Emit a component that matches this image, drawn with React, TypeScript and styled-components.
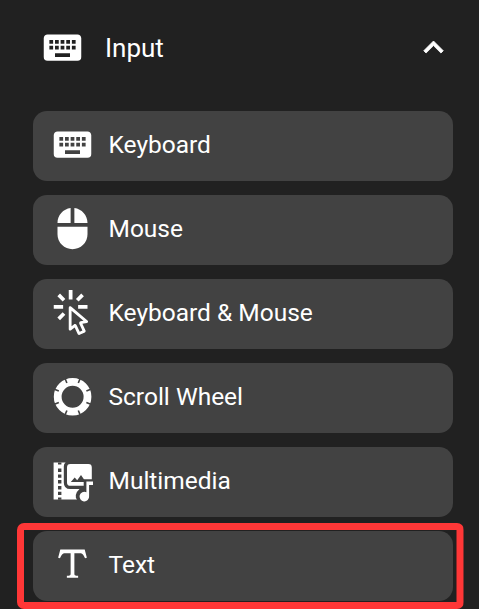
import React from "react";
import styled, { createGlobalStyle } from "styled-components";

const GlobalStyle = createGlobalStyle`
  body { margin: 0; background: #212121; }
`;

const Panel = styled.main`
  box-sizing: border-box;
  width: 479px;
  height: 609px;
  overflow: hidden;
  background: #212121;
  color: #fff;
  font-family: Roboto, sans-serif;
  font-size: 24.5px;
  line-height: 34px;
`;

const Header = styled.header`
  box-sizing: border-box;
  display: flex;
  align-items: center;
  height: 97px;
  padding: 0 26px 2px 39.5px;
`;

const HeaderTitle = styled.span`
  flex: 1;
  margin-left: 20.5px;
  font-size: 26px;
`;

const Glyph = styled.svg<{ $size?: number; $stroke?: number }>`
  display: block;
  flex: none;
  width: ${(p) => p.$size ?? 45}px;
  height: ${(p) => p.$size ?? 45}px;
  fill: #fff;
  stroke: ${(p) => (p.$stroke ? "#fff" : "none")};
  stroke-width: ${(p) => p.$stroke ?? 0};
  overflow: visible;
`;

const List = styled.ul`
  list-style: none;
  display: flex;
  flex-direction: column;
  gap: 14px;
  margin: 14px 26px 0 33px;
  padding: 0;
`;

const Item = styled.li`
  position: relative;
  box-sizing: border-box;
  display: flex;
  align-items: center;
  height: 70px;
  padding: 0 17px 3.8px;
  border-radius: 14px;
  background: #424242;
`;

const ItemLabel = styled.span`
  margin-left: 13.5px;
  padding-top: 2px;
`;

const Highlight = styled.div`
  position: absolute;
  inset: -8px -10.5px -8px -16px;
  border-radius: 7px;
  background: #ff3737;
  clip-path: polygon(evenodd, 0 0, 100% 0, 100% 100%, 0 100%, 0 0, 7px 7px, calc(100% - 7px) 7px, calc(100% - 7px) calc(100% - 7px), 7px calc(100% - 7px), 7px 7px);
`;

const KEYBOARD =
  "M19,10H17V8H19M19,13H17V11H19M16,10H14V8H16M16,13H14V11H16M16,17H8V15H16M7,10H5V8H7M7,13H5V11H7M8,11H10V13H8M8,8H10V10H8M11,11H13V13H11M11,8H13V10H11M20,5H4C2.89,5 2,5.89 2,7V17A2,2 0 0,0 4,19H20A2,2 0 0,0 22,17V7C22,5.89 21.1,5 20,5Z";
const MOUSE =
  "M11,1.07C7.05,1.56 4,4.92 4,9H11M4,15A8,8 0 0,0 12,23A8,8 0 0,0 20,15V11H4M13,1.07V9H20C20,4.92 16.94,1.56 13,1.07Z";
const CLICK =
  "M11.5,11L17.88,16.37L17,16.55L16.36,16.67C15.73,16.8 15.37,17.5 15.65,18.07L15.92,18.65L17.28,21.59L15.86,22.25L14.5,19.32L14.24,18.74C13.97,18.15 13.22,17.97 12.72,18.38L12.21,18.78L11.5,19.35V11M10.76,8.69A0.76,0.76 0 0,0 10,9.45V20.9C10,21.32 10.34,21.66 10.76,21.66C10.95,21.66 11.11,21.6 11.24,21.5L13.15,19.95L14.81,23.57C14.94,23.84 15.21,24 15.5,24C15.61,24 15.72,24 15.83,23.92L18.59,22.64C18.97,22.46 19.15,22 18.95,21.63L17.28,18L19.69,17.55C19.85,17.5 20,17.43 20.12,17.29C20.39,16.97 20.35,16.5 20,16.21L11.26,8.86L11.25,8.87C11.12,8.76 10.95,8.69 10.76,8.69M15,10V8H20V10H15M13.83,4.76L16.66,1.93L18.07,3.34L15.24,6.17L13.83,4.76M10,0H12V5H10V0M3.93,14.66L6.76,11.83L8.17,13.24L5.34,16.07L3.93,14.66M3.93,3.34L5.34,1.93L8.17,4.76L6.76,6.17L3.93,3.34M7,10H2V8H7V10";
const FORMAT =
  "M18.5,4L19.66,8.35L18.7,8.61C18.25,7.74 17.79,6.87 17.26,6.43C16.73,6 16.11,6 15.5,6H13V16.5C13,17 13,17.5 13.33,17.75C13.67,18 14.33,18 15,18V19H9V18C9.67,18 10.33,18 10.67,17.75C11,17.5 11,17 11,16.5V6H8.5C7.89,6 7.27,6 6.74,6.43C6.21,6.87 5.75,7.74 5.3,8.61L4.34,8.35L5.5,4H18.5Z";
const CHEVRON_UP =
  "M7.41,15.41L12,10.83L16.59,15.41L18,14L12,8L6,14L7.41,15.41Z";

const PathIcon = ({ d, size, stroke }: { d: string; size?: number; stroke?: number }) => (
  <Glyph viewBox="0 0 24 24" $size={size} $stroke={stroke}>
    <path d={d} />
  </Glyph>
);

const WheelIcon = () => (
  <Glyph viewBox="0 0 45 45">
    <circle cx="22.6" cy="22.7" r="14.9" fill="none" stroke="#fff" strokeWidth="7.8" />
    {[22.5, 67.5, 112.5, 157.5, 202.5, 247.5, 292.5, 337.5].map((a) => (
      <path
        key={a}
        d="M21.8 3h1.6v4.8h-1.6z"
        fill="#424242"
        transform={`rotate(${a} 22.6 22.7)`}
      />
    ))}
  </Glyph>
);

const MediaIcon = () => (
  <Glyph viewBox="0 0 45 45">
    <path d="M3.6 4.4H15.6Q13.8 5.6 13.8 8.2V24.4Q13.8 31 20.2 31H29.5Q27 33 25.8 37Q25.4 40 27 41.6H3.6Z" />
    <path
      fill="#424242"
      d="M8 4.4h3.4v2.2H8zM8 10.5h3.4v3.4H8zM8 16.4h3.4v3.4H8zM8 22.1h3.4v3.4H8zM8 28h3.4v3.4H8zM8 33.7h3.4v3.2H8zM8 39.4h3.4v2.3H8z"
    />
    <path d="M19.8 6H38.4Q41.8 6 41.8 9.4V21.3H33.7V27.8H20.4Q17 27.8 17 24.4V9.4Q17 6 20.4 6Z" />
    <path fill="#424242" d="M20.8 24L24.7 19.5L27.2 22.3L31 17L35.8 24Z" />
    <path d="M36.4 23.6H43V27H39.1V38.2A4.8 4.8 0 1 1 36.4 34.3Z" />
  </Glyph>
);

const items: { label: string; icon: React.ReactNode; highlighted?: boolean }[] = [
  { label: "Keyboard", icon: <PathIcon d={KEYBOARD} /> },
  { label: "Mouse", icon: <PathIcon d={MOUSE} /> },
  { label: "Keyboard & Mouse", icon: <PathIcon d={CLICK} /> },
  { label: "Scroll Wheel", icon: <WheelIcon /> },
  { label: "Multimedia", icon: <MediaIcon /> },
  { label: "Text", icon: <PathIcon d={FORMAT} />, highlighted: true },
];

export default function App() {
  return (
    <Panel>
      <GlobalStyle />
      <Header>
        <PathIcon d={KEYBOARD} />
        <HeaderTitle>Input</HeaderTitle>
        <PathIcon d={CHEVRON_UP} size={39} stroke={0.5} />
      </Header>
      <List>
        {items.map((item) => (
          <Item key={item.label}>
            {item.icon}
            <ItemLabel>{item.label}</ItemLabel>
            {item.highlighted && <Highlight />}
          </Item>
        ))}
      </List>
    </Panel>
  );
}
